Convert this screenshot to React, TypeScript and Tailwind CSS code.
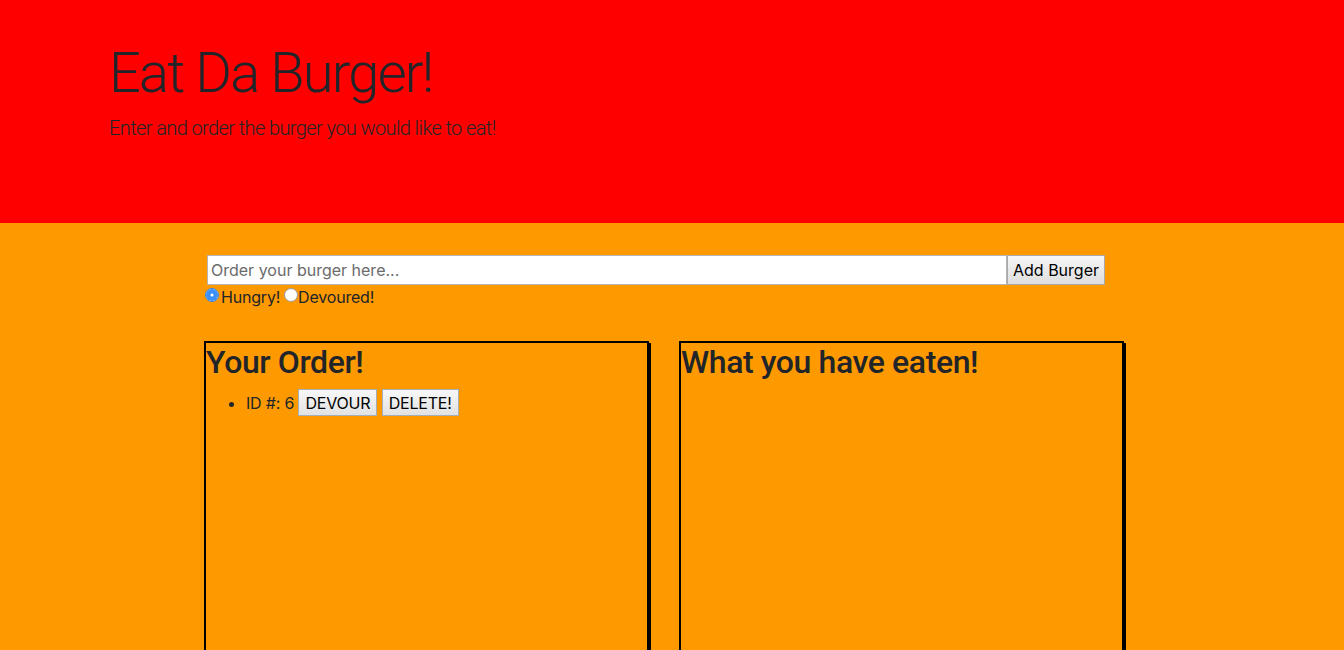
import { useState } from "react";

const radioCls =
  "appearance-none w-[14px] h-[14px] rounded-full border border-[#9a9a9a] bg-white checked:border-[#2f7fe6] checked:shadow-[inset_0_0_0_4.5px_#3b8ff6]";

export default function App() {
  const [status, setStatus] = useState("hungry");

  return (
    <div className="min-h-screen bg-[#ff9900] text-[#212529] font-['Inter',sans-serif]">
      <header className="h-[223px] bg-[#ff0000] pl-[109px] pt-[40px] font-['Roboto',sans-serif]">
        <h1 className="text-[56px] font-light leading-[1.2] tracking-[-1.8px] mb-[6px]">Eat Da Burger!</h1>
        <p className="text-[20px] font-light leading-[1.5] tracking-[-0.6px]">
          Enter and order the burger you would like to eat!
        </p>
      </header>

      <main className="pl-[200px] pt-[32px]">
        <form className="flex ml-[7px]" onSubmit={(e) => e.preventDefault()}>
          <input
            type="text"
            placeholder="Order your burger here..."
            className="w-[800px] h-[30px] bg-white border border-[#b5b5b5] px-[3px] text-[16px] placeholder:text-[#6b6b6b] outline-none"
          />
          <button
            type="submit"
            className="h-[30px] w-[98px] border border-[#a9a9a9] bg-gradient-to-b from-[#f6f6f6] to-[#dedede] text-[16px] text-black"
          >
            Add Burger
          </button>
        </form>

        <div className="flex items-center h-[24px] text-[16px] tracking-[-0.2px]">
          <input
            type="radio"
            name="status"
            checked={status === "hungry"}
            onChange={() => setStatus("hungry")}
            className={"ml-[5px] -mt-[4px] " + radioCls}
          />
          <span className="ml-[2px]">Hungry!</span>
          <input
            type="radio"
            name="status"
            checked={status === "devoured"}
            onChange={() => setStatus("devoured")}
            className={"ml-[4px] -mt-[4px] " + radioCls}
          />
          <span>Devoured!</span>
        </div>

        <div className="flex gap-[30px] ml-[4px] mt-[32px]">
          <section className="w-[445px] h-[420px] border-2 border-black shadow-[2px_2px_0_#000]">
            <h2 className="text-[32px] font-medium leading-[1.2] font-['Roboto',sans-serif] tracking-[-0.4px] mb-[8px]">
              Your Order!
            </h2>
            <ul className="list-disc pl-[40px] text-[16px] tracking-[-0.2px]">
              <li>
                ID #: 6{" "}
                <button className="h-[27px] px-[6px] border border-[#a3aebb] bg-gradient-to-b from-[#f8f8f8] to-[#e2e2e2] text-black">
                  DEVOUR
                </button>{" "}
                <button className="h-[27px] px-[6px] border border-[#a3aebb] bg-gradient-to-b from-[#f8f8f8] to-[#e2e2e2] text-black">
                  DELETE!
                </button>
              </li>
            </ul>
          </section>
          <section className="w-[445px] h-[420px] border-2 border-black shadow-[2px_2px_0_#000]">
            <h2 className="text-[32px] font-medium leading-[1.2] font-['Roboto',sans-serif] tracking-[-0.4px] mb-[8px]">
              What you have eaten!
            </h2>
          </section>
        </div>
      </main>
    </div>
  );
}
